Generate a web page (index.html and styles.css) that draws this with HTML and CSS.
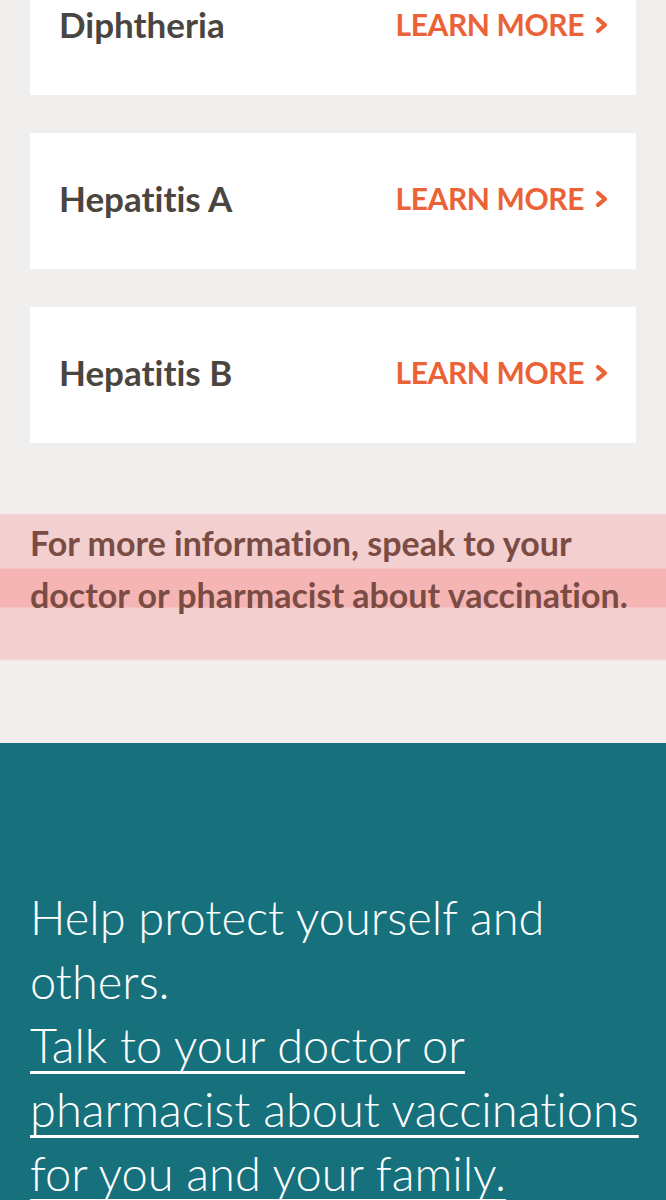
FILE: index.html
```html
<!DOCTYPE html>
<html lang="en">
<head>
<meta charset="utf-8">
<title>Vaccinations</title>
<link rel="stylesheet" href="styles.css">
</head>
<body>
<main class="page">
  <section class="diseases">
    <div class="card">
      <h3 class="card-title">Diphtheria</h3>
      <a class="learn" href="#">LEARN MORE <svg class="chev" viewBox="0 0 13 18"><path d="M3 3 L10 9 L3 15" fill="none" stroke="currentColor" stroke-width="4.2" stroke-linecap="round" stroke-linejoin="round"/></svg></a>
    </div>
    <div class="card">
      <h3 class="card-title">Hepatitis A</h3>
      <a class="learn" href="#">LEARN MORE <svg class="chev" viewBox="0 0 13 18"><path d="M3 3 L10 9 L3 15" fill="none" stroke="currentColor" stroke-width="4.2" stroke-linecap="round" stroke-linejoin="round"/></svg></a>
    </div>
    <div class="card">
      <h3 class="card-title">Hepatitis B</h3>
      <a class="learn" href="#">LEARN MORE <svg class="chev" viewBox="0 0 13 18"><path d="M3 3 L10 9 L3 15" fill="none" stroke="currentColor" stroke-width="4.2" stroke-linecap="round" stroke-linejoin="round"/></svg></a>
    </div>
  </section>

  <section class="note">
    <p class="note-text">For more information, speak to your doctor or pharmacist about vaccination.</p>
  </section>

  <section class="cta">
    <p class="cta-text">Help protect yourself and others.<br><a href="#" class="cta-link">Talk to your doctor or pharmacist about vaccinations for you and your family.</a></p>
  </section>
</main>
</body>
</html>
```

FILE: styles.css
```css
* { box-sizing: border-box; }

html, body {
  margin: 0;
  padding: 0;
}

body {
  background: #f0efed;
  font-family: "Lato", "Liberation Sans", sans-serif;
  font-variant-ligatures: none;
  overflow: hidden;
}

.page {
  margin-top: -41px;
}

.diseases {
  display: flex;
  flex-direction: column;
  gap: 38px;
  padding: 0 30px;
}

.card {
  background: #ffffff;
  height: 136px;
  display: flex;
  align-items: center;
  justify-content: space-between;
  padding: 0 28px 6px 29px;
}

.card-title {
  margin: 0;
  font-size: 35px;
  font-weight: 700;
  color: #4b4540;
}

.learn {
  display: flex;
  align-items: center;
  gap: 11px;
  font-size: 30px;
  font-weight: 700;
  color: #ea6235;
  text-decoration: none;
  letter-spacing: -0.4px;
}

.chev {
  display: block;
  flex-shrink: 0;
  width: 13px;
  height: 18px;
  margin-top: 1px;
}

.note {
  margin-top: 70px;
  padding: 4px 24px 40px 30px;
  background:
    linear-gradient(to bottom,
      rgba(242,200,200,0) 0,
      #f3cfcf 2px,
      #f3cfcf 55px,
      #f5b5b5 56px,
      #f5b5b5 94px,
      #f3cfcf 95px,
      #f3cfcf calc(100% - 2px),
      rgba(242,200,200,0) 100%);
}

.note-text {
  margin: 0;
  font-size: 34px;
  font-weight: 700;
  line-height: 52px;
  color: #7a4c44;
}

.cta {
  margin-top: 82px;
  background: #16717d;
  padding: 142px 20px 100px 30px;
}

.cta-text {
  margin: 0;
  font-size: 47px;
  font-weight: 300;
  line-height: 64px;
  color: #ffffff;
}

.cta-link {
  color: #ffffff;
  text-decoration: underline;
  text-decoration-thickness: 3px;
  text-underline-offset: 8px;
}
```
